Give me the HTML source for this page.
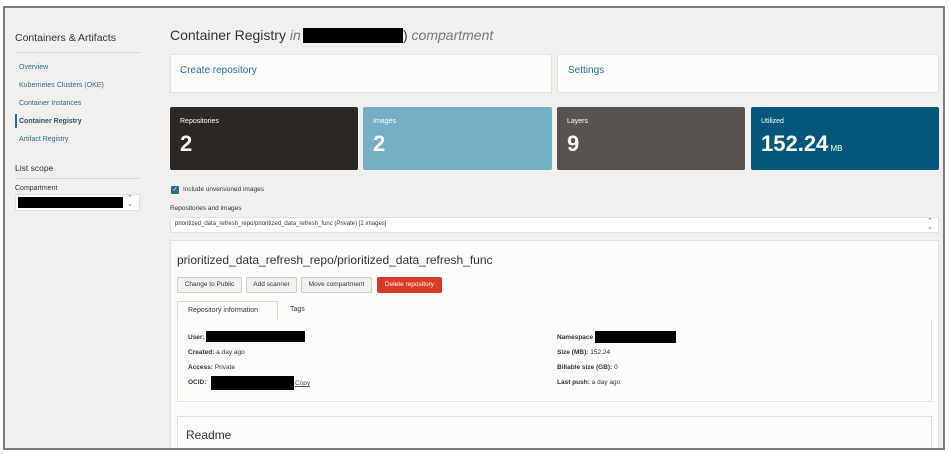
<!DOCTYPE html>
<html><head><meta charset="utf-8"><style>
*{margin:0;padding:0;box-sizing:border-box}
body{width:949px;height:454px;background:#fff;font-family:"Liberation Sans",Arial,sans-serif;position:relative;overflow:hidden}
.frame{position:absolute;left:3px;top:6px;width:942px;height:444px;border:2px solid #7a7a7a;background:#f1f0ee;overflow:hidden}
.a{position:absolute}
.nav{font-size:7px;color:#2b6e8a}
.card{background:#fcfcfb;border:1px solid #e2e1de}
.tile{color:#fff;border-radius:2px}
.tile .l{position:absolute;left:10px;top:11px;font-size:7px}
.tile .n{position:absolute;left:10px;top:24px;font-size:22px;font-weight:bold}
.btn{position:absolute;top:277px;height:16px;border:1px solid #cfcdc9;background:#f3f2f0;font-size:6.5px;color:#333;text-align:center;line-height:14px;border-radius:2px}
.lbl{font-size:6.5px;color:#333}
.lbl b{font-weight:bold}
.blk{background:#000;position:absolute}
</style></head><body>
<div class="frame">
<div class="a" style="left:10px;top:24px;font-size:10.5px;color:#333">Containers &amp; Artifacts</div>
<div class="a" style="left:10px;top:44px;width:125px;height:1px;background:#d8d6d2"></div>
<div class="a nav" style="left:14px;top:56px">Overview</div>
<div class="a nav" style="left:14px;top:74px">Kubernetes Clusters (OKE)</div>
<div class="a nav" style="left:14px;top:92px">Container Instances</div>
<div class="a" style="left:10px;top:106px;width:2px;height:14px;background:#2b6e8a"></div>
<div class="a nav" style="left:14px;top:110px;font-weight:bold;color:#22566e">Container Registry</div>
<div class="a nav" style="left:14px;top:128px">Artifact Registry</div>
<div class="a" style="left:10px;top:155px;font-size:8.5px;color:#333">List scope</div>
<div class="a" style="left:10px;top:170px;width:125px;height:1px;background:#d8d6d2"></div>
<div class="a" style="left:10px;top:177px;font-size:7px;color:#333">Compartment</div>
<div class="a card" style="left:10px;top:186px;width:125px;height:17px;background:#fff"></div>
<div class="blk" style="left:13px;top:189px;width:105px;height:11px"></div>
<div class="a" style="left:122px;top:188px;font-size:7px;color:#666;line-height:6px">⌃<br>⌄</div>

<div class="a" style="left:165px;top:19px;font-size:14px;color:#333">Container Registry <i style="color:#777">in</i></div>
<div class="blk" style="left:298px;top:20px;width:100px;height:15px"></div>
<div class="a" style="left:398px;top:19px;font-size:14px;color:#777;font-style:italic"><span style="font-style:normal;color:#333">)</span> compartment</div>

<div class="a card" style="left:165px;top:46px;width:382px;height:39px"></div>
<div class="a" style="left:175px;top:57px;font-size:10px;color:#2b6e8a">Create repository</div>
<div class="a card" style="left:552px;top:46px;width:382px;height:39px"></div>
<div class="a" style="left:563px;top:57px;font-size:10px;color:#2b6e8a">Settings</div>

<div class="a tile" style="left:165px;top:99px;width:188px;height:63px;background:#2b2724"><span class="l">Repositories</span><span class="n">2</span></div>
<div class="a tile" style="left:358px;top:99px;width:189px;height:63px;background:#74afc6"><span class="l">Images</span><span class="n">2</span></div>
<div class="a tile" style="left:552px;top:99px;width:188px;height:63px;background:#58534f"><span class="l">Layers</span><span class="n">9</span></div>
<div class="a tile" style="left:746px;top:99px;width:188px;height:63px;background:#04567a"><span class="l">Utilized</span><span class="n">152.24<span style="font-size:8px;font-weight:normal"> MB</span></span></div>

<div class="a" style="left:166px;top:178px;width:8px;height:8px;background:#2b6e8a;border-radius:1px;color:#fff;font-size:6px;line-height:8px;text-align:center">✓</div>
<div class="a lbl" style="left:178px;top:178px">Include unversioned images</div>
<div class="a lbl" style="left:165px;top:197px">Repositories and images</div>
<div class="a card" style="left:165px;top:209px;width:769px;height:16px;background:#fff"></div>
<div class="a lbl" style="left:170px;top:213px;font-size:6px">prioritized_data_refresh_repo/prioritized_data_refresh_func (Private) [2 images]</div>
<div class="a" style="left:922px;top:211px;font-size:7px;color:#666;line-height:6px">⌃<br>⌄</div>

<div class="a card" style="left:165px;top:232px;width:769px;height:220px"></div>
<div class="a" style="left:172px;top:245px;font-size:12px;color:#333">prioritized_data_refresh_repo/prioritized_data_refresh_func</div>
<div class="btn" style="left:172px;top:269px;width:65px">Change to Public</div>
<div class="btn" style="left:241px;top:269px;width:51px">Add scanner</div>
<div class="btn" style="left:296px;top:269px;width:71px">Move compartment</div>
<div class="btn" style="left:372px;top:269px;width:65px;background:#d63b25;border-color:#d63b25;color:#fff">Delete repository</div>
<div class="a" style="left:172px;top:312px;width:755px;height:1px;background:#dcdad6"></div>
<div class="a" style="left:172px;top:293px;width:101px;height:20px;background:#fcfcfb;border:1px solid #dcdad6;border-bottom:none"></div>
<div class="a lbl" style="left:183px;top:299px;font-size:7px">Repository information</div>
<div class="a lbl" style="left:285px;top:298px;font-size:7px">Tags</div>
<div class="a card" style="left:172px;top:312px;width:755px;height:82px;border-top:none"></div>
<div class="a lbl" style="left:183px;top:326px"><b>User:</b></div>
<div class="blk" style="left:201px;top:323px;width:99px;height:11px"></div>
<div class="a lbl" style="left:183px;top:341px"><b>Created:</b> a day ago</div>
<div class="a lbl" style="left:183px;top:356px"><b>Access:</b> Private</div>
<div class="a lbl" style="left:183px;top:371px"><b>OCID:</b></div>
<div class="blk" style="left:206px;top:368px;width:83px;height:14px"></div>
<div class="a lbl" style="left:290px;top:372px;text-decoration:underline;color:#555">Copy</div>
<div class="a lbl" style="left:552px;top:326px"><b>Namespace</b></div>
<div class="blk" style="left:590px;top:323px;width:81px;height:12px"></div>
<div class="a lbl" style="left:552px;top:341px"><b>Size (MB):</b> 152.24</div>
<div class="a lbl" style="left:552px;top:356px"><b>Billable size (GB):</b> 0</div>
<div class="a lbl" style="left:552px;top:371px"><b>Last push:</b> a day ago</div>
<div class="a card" style="left:172px;top:408px;width:755px;height:50px"></div>
<div class="a" style="left:181px;top:420px;font-size:12px;color:#333">Readme</div>
</div>
</body></html>
